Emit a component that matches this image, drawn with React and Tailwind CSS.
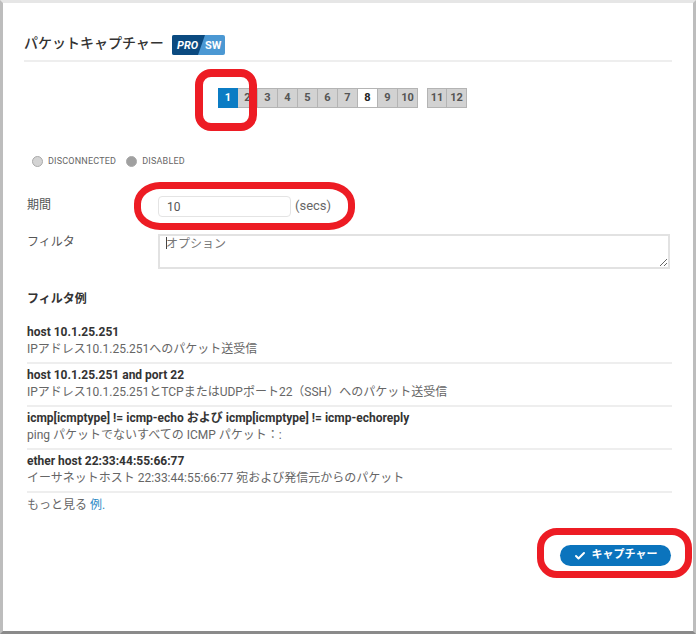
import React from "react";
import { Check } from "lucide-react";

const FONT = "font-['Roboto','Noto_Sans_CJK_JP',sans-serif]";

const ports = ["1", "2", "3", "4", "5", "6", "7", "8", "9", "10"];

const examples = [
  { code: "host 10.1.25.251", text: "IPアドレス10.1.25.251へのパケット送受信" },
  { code: "host 10.1.25.251 and port 22", text: "IPアドレス10.1.25.251とTCPまたはUDPポート22（SSH）へのパケット送受信" },
  { code: "icmp[icmptype] != icmp-echo および icmp[icmptype] != icmp-echoreply", text: "ping パケットでないすべての ICMP パケット：:" },
  { code: "ether host 22:33:44:55:66:77", text: "イーサネットホスト 22:33:44:55:66:77 宛および発信元からのパケット" },
];

function Port({ label }) {
  let color = "bg-[#d2d2d2] text-[#555] border-[#b4b4b4]";
  if (label === "1") color = "bg-[#0b7cc4] text-white border-[#0b7cc4]";
  if (label === "8") color = "bg-white text-[#222] border-[#b4b4b4]";
  return (
    <div className={`flex h-5 w-[20px] items-center justify-center border-y border-r text-[11px] font-bold first:border-l ${color}`}>
      {label}
    </div>
  );
}

function Status({ color, label }) {
  return (
    <div className="flex items-center gap-[5px]">
      <span className={`h-[11px] w-[11px] rounded-full border border-[#aaa] ${color}`} />
      <span className="text-[9px] tracking-[0.2px] text-[#666]">{label}</span>
    </div>
  );
}

function ProBadge() {
  return (
    <svg width="53" height="20" viewBox="0 0 53 20">
      <rect width="53" height="20" rx="2" fill="#4b98d3" />
      <path d="M2 0H33L26 20H2a2 2 0 0 1-2-2V2a2 2 0 0 1 2-2z" fill="#0b4a80" />
      <text x="5" y="14" fill="white" fontSize="11" fontWeight="700" fontStyle="italic" fontFamily="Roboto">PRO</text>
      <text x="33" y="14" fill="white" fontSize="11" fontWeight="700" fontFamily="Roboto">SW</text>
    </svg>
  );
}

export default function App() {
  return (
    <div className={`${FONT} relative h-[634px] w-[696px] overflow-hidden border-t-[3px] border-b-[3px] border-x-[3px] border-t-[#e6e6e6] border-b-[#8a8a8a] border-x-[#bdbdbd] bg-white text-xs text-[#555]`}>
      <div className="flex h-full flex-col rounded-md bg-white px-[21px] pt-[29px]">
        <div className="flex h-[30px] items-start gap-2 border-b-2 border-[#eeeeee]">
          <h1 className="text-[14px] leading-[22px] font-medium text-[#333]">パケットキャプチャー</h1>
          <div className="mt-[3px]"><ProBadge /></div>
        </div>

        <div className="mt-[26px] ml-[194px] flex">
          <div className="flex">{ports.map((p) => <Port key={p} label={p} />)}</div>
          <div className="ml-[9px] flex"><Port label="11" /><Port label="12" /></div>
        </div>

        <div className="mt-[47px] ml-[8px] flex items-center gap-[10px]">
          <Status color="bg-[#d4d4d4]" label="DISCONNECTED" />
          <Status color="bg-[#a0a0a0]" label="DISABLED" />
        </div>

        <div className="mt-[29px] flex items-start">
          <label className="ml-[3px] w-[131px] pt-[1px] leading-[16px]">期間</label>
          <input readOnly value="10" className="h-[21px] w-[133px] rounded-sm border border-[#e4e4e4] px-2 text-xs text-[#555] outline-none" />
          <span className="ml-1 pt-[2px] text-[13px] leading-[16px] text-[#666]">(secs)</span>
        </div>

        <div className="mt-[17px] flex items-start">
          <label className="ml-[3px] w-[131px] leading-[16px]">フィルタ</label>
          <div className="relative">
            <textarea placeholder="オプション" className="block h-[35px] w-[512px] border-2 border-[#e2e2e2] px-[6px] py-0 text-xs leading-[16px] outline-none placeholder:text-[#777]" />
            <span className="absolute top-[3px] left-[8px] h-[12px] w-px bg-[#444]" />
          </div>
        </div>

        <h2 className="mt-[22px] ml-[3px] text-[12px] leading-[16px] font-bold text-[#333]">フィルタ例</h2>

        <div className="mt-[14px] ml-[3px] w-[645px]">
          {examples.map((ex) => (
            <div key={ex.code} className="flex h-[43px] flex-col justify-end border-b-2 border-[#eeeeee] pb-[4px]">
              <div className="text-xs leading-[17px] font-bold text-[#333]">{ex.code}</div>
              <div className="text-xs leading-[17px] text-[#666]">{ex.text}</div>
            </div>
          ))}
        </div>

        <div className="mt-[4px] ml-[3px] leading-[17px] text-[#666]">
          もっと見る <a className="text-[#2b8ac6]">例.</a>
        </div>

        <div className="mt-[31px] flex justify-end pr-[1px]">
          <button className="flex h-[21px] w-[111px] items-center justify-center gap-[6px] rounded-full bg-[#0b74bd] text-[11px] font-bold text-white">
            <Check size={12} strokeWidth={4} />
            キャプチャー
          </button>
        </div>
      </div>

      <div className="absolute top-[66px] left-[192px] h-[62px] w-[62px] rounded-[16px] border-[8px] border-[#ed1c24]" />
      <div className="absolute top-[179px] left-[131px] h-[48px] w-[221px] rounded-[26px/22px] border-[7px] border-[#ed1c24]" />
      <div className="absolute top-[525px] left-[534px] h-[50px] w-[155px] rounded-[20px] border-[7px] border-[#ed1c24]" />
    </div>
  );
}
